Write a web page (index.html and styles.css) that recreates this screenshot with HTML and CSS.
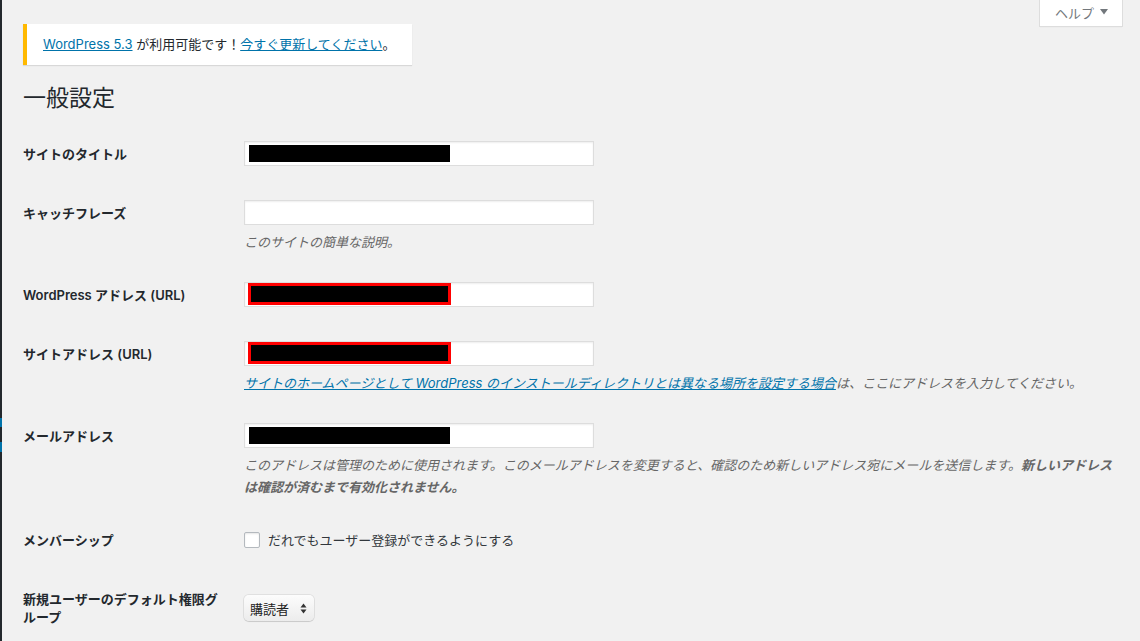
FILE: index.html
```html
<!DOCTYPE html>
<html lang="ja">
<head>
    <meta charset="UTF-8">
    <meta name="viewport" content="width=device-width, initial-scale=1.0">
    <title>一般設定</title>
    <link rel="stylesheet" href="styles.css">
</head>
<body>
    <!-- borde del menú de administración -->
    <div class="admin-edge">
        <span class="edge-mark"></span>
        <span class="edge-mark second"></span>
    </div>

    <div class="wrap">
        <div class="screen-meta-links">
            <button class="help-tab">ヘルプ
                <svg width="8" height="6" viewBox="0 0 8 6"><path d="M0 0h8L4 5.5z" fill="#72777c"/></svg>
            </button>
        </div>

        <div class="update-nag">
            <a href="#">WordPress 5.3</a> が利用可能です！<a href="#">今すぐ更新してください</a>。
        </div>

        <h1>一般設定</h1>

        <div class="form-table">
            <div class="form-row">
                <div class="row-label">サイトのタイトル</div>
                <div class="row-field">
                    <div class="text-input"><span class="redacted"></span></div>
                </div>
            </div>

            <div class="form-row">
                <div class="row-label">キャッチフレーズ</div>
                <div class="row-field">
                    <div class="text-input"></div>
                    <p class="description">このサイトの簡単な説明。</p>
                </div>
            </div>

            <div class="form-row">
                <div class="row-label">WordPress アドレス (URL)</div>
                <div class="row-field">
                    <div class="text-input marked"><span class="redacted outlined"></span></div>
                </div>
            </div>

            <div class="form-row">
                <div class="row-label">サイトアドレス (URL)</div>
                <div class="row-field">
                    <div class="text-input marked"><span class="redacted outlined"></span></div>
                    <p class="description"><a href="#">サイトのホームページとして WordPress のインストールディレクトリとは異なる場所を設定する場合</a>は、ここにアドレスを入力してください。</p>
                </div>
            </div>

            <div class="form-row">
                <div class="row-label">メールアドレス</div>
                <div class="row-field">
                    <div class="text-input"><span class="redacted"></span></div>
                    <p class="description">このアドレスは管理のために使用されます。このメールアドレスを変更すると、確認のため新しいアドレス宛にメールを送信します。<strong>新しいアドレス</strong><strong>は確認が済むまで有効化されません。</strong></p>
                </div>
            </div>

            <div class="form-row">
                <div class="row-label">メンバーシップ</div>
                <div class="row-field">
                    <label class="checkbox-line">
                        <span class="checkbox"></span>
                        だれでもユーザー登録ができるようにする
                    </label>
                </div>
            </div>

            <div class="form-row centered">
                <div class="row-label">新規ユーザーのデフォルト権限グループ</div>
                <div class="row-field">
                    <div class="select-box">
                        <span>購読者</span>
                        <svg width="7" height="11" viewBox="0 0 7 11">
                            <path d="M3.5 0.5L6.5 4.5H0.5z" fill="#333"/>
                            <path d="M3.5 10.5L6.5 6.5H0.5z" fill="#333"/>
                        </svg>
                    </div>
                </div>
            </div>
        </div>
    </div>
</body>
</html>
```

FILE: styles.css
```css
/* base de la página */
html, body {
    margin: 0;
    padding: 0;
    height: 100%;
}

body {
    display: flex;
    background: #f1f1f1;
    color: #23282d;
    font-family: "Inter", "Noto Sans CJK JP", sans-serif;
    font-size: 13px;
}

a {
    color: #0073aa;
}

/* franja oscura del menú lateral */
.admin-edge {
    width: 2px;
    flex-shrink: 0;
    background: #23282d;
    padding-top: 418px;
    box-sizing: border-box;
}

.edge-mark {
    display: block;
    height: 9px;
    background: #0073aa;
}

.edge-mark.second {
    height: 10px;
    margin-top: 15px;
}

.wrap {
    flex: 1;
    padding: 0 17px 0 21px;
}

.screen-meta-links {
    float: right;
}

.help-tab {
    display: flex;
    align-items: center;
    gap: 6px;
    height: 27px;
    width: 84px;
    box-sizing: border-box;
    padding: 0 0 2px 15px;
    background: #fff;
    border: 1px solid #ddd;
    border-top: none;
    box-shadow: 0 1px 1px -1px rgba(0, 0, 0, 0.1);
    color: #72777c;
    font-family: inherit;
    font-size: 13px;
}

.update-nag {
    width: fit-content;
    margin-top: 24px;
    padding: 11px 17px 11px 16px;
    background: #fff;
    border-left: 4px solid #ffb900;
    box-shadow: 0 1px 1px 0 rgba(0, 0, 0, 0.1);
    line-height: 19px;
}

h1 {
    margin: 18px 0 11px;
    font-size: 23px;
    font-weight: 400;
    line-height: 30px;
}

/* filas del formulario */
.form-row {
    display: flex;
    padding: 17px 0;
}

.form-row.centered {
    align-items: center;
}

.row-label {
    width: 221px;
    flex-shrink: 0;
    box-sizing: border-box;
    padding: 4px 21px 0 0;
    font-weight: 600;
    line-height: 18px;
}

.form-row.centered .row-label {
    padding-bottom: 4px;
}

.row-field {
    flex: 1;
}

.text-input {
    width: 350px;
    height: 25px;
    box-sizing: border-box;
    padding: 3px 4px;
    background: #fff;
    border: 1px solid #ddd;
    box-shadow: inset 0 1px 2px rgba(0, 0, 0, 0.07);
}

.text-input.marked {
    padding: 0 3px;
}

.redacted {
    display: block;
    width: 201px;
    height: 17px;
    background: #000;
}

.redacted.outlined {
    width: 203px;
    height: 22px;
    box-sizing: border-box;
    border: 3px solid #f00;
}

.description {
    margin: 6px 0 -5px;
    line-height: 22px;
    font-style: italic;
    color: #666;
}

.description strong {
    font-weight: 600;
}

.checkbox-line {
    display: flex;
    align-items: center;
    height: 25px;
    color: #32373c;
}

.checkbox {
    width: 16px;
    height: 16px;
    box-sizing: border-box;
    margin-right: 8px;
    background: #fff;
    border: 1px solid #b4b9be;
    border-radius: 2px;
    box-shadow: inset 0 1px 2px rgba(0, 0, 0, 0.1);
}

.select-box {
    display: flex;
    align-items: center;
    justify-content: space-between;
    width: 70px;
    height: 26px;
    box-sizing: border-box;
    padding: 0 7px 0 6px;
    border-radius: 5px;
    background: linear-gradient(#fcfcfc, #ececec);
    box-shadow: 0 0 0 1px rgba(0, 0, 0, 0.07), 0 1px 1px rgba(0, 0, 0, 0.1);
    color: #222;
}
```
